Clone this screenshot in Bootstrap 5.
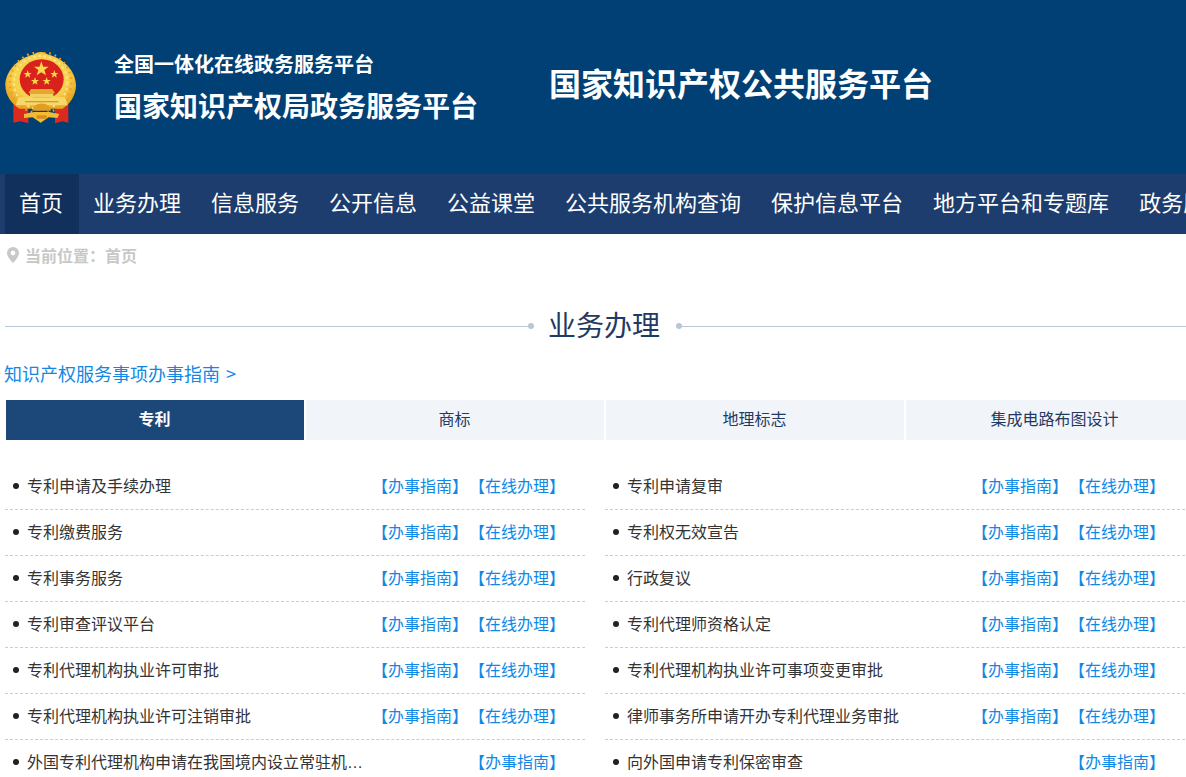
<!DOCTYPE html>
<html lang="zh">
<head>
<meta charset="utf-8">
<title>国家知识产权局政务服务平台</title>
<link href="https://cdn.jsdelivr.net/npm/bootstrap@5.3.0/dist/css/bootstrap.min.css" rel="stylesheet">
<style>
html,body{overflow:hidden;height:777px;background:#fff}
body{font-family:"Microsoft YaHei","Noto Sans CJK SC","Liberation Sans",sans-serif;color:#333;width:1186px}
.site-top{height:174px;background:#004074;color:#fff}
.site-inner{width:1200px;margin-left:5px}
.top-row{height:174px}
.emblem{width:72px;height:74px;flex:none;margin-right:37px;margin-top:3px}
.top-small{font-size:20px;font-weight:700;line-height:30px}
.top-big{font-size:28px;font-weight:700;line-height:42px;margin-top:5px}
.top-name{font-size:32px;font-weight:700;margin-left:71px;line-height:42px;padding-bottom:10px}
.site-nav{height:60px;background:#1c3d6e}
.nav-item-x{display:block;flex:none;padding:0 16px 6px 14px;font-size:22px;line-height:54px;color:#fff;text-decoration:none;white-space:nowrap}
.nav-item-x.on{background:#12305c}
.crumb{font-size:16px;font-weight:700;color:#c8c8c8;height:42px;line-height:38px}
.crumb svg{margin:0 6px 0 2px}
.title-row{height:56px;margin-top:22px;width:1200px}
.title-row .ln{flex:1;height:1px;background:#b9c6d8}
.title-row .dot{width:6px;height:6px;border-radius:50%;background:#b9c6d8;flex:none}
.title-txt{font-size:28px;color:#1f3a63;padding:0 16px 4px 14px;line-height:52px}
.guide{font-size:18px;color:#1088e4;text-decoration:none;display:block;line-height:24px;margin:7px 0 0 -1px;word-spacing:2px}
.tabs-x{margin-top:15px;height:40px}
.tab-x{width:300px;flex:none;height:40px;line-height:36px;padding-right:1px;font-size:16px;text-align:center;color:#1f3a63;background:#f1f4f9;border-left:1px solid #fff;border-right:1px solid #fff}
.tab-x.on{background:#1c4879;color:#fff;font-weight:700}
.lists{margin-top:24px;gap:20px}
.col-x{width:580px;flex:none;list-style:none;margin:0;padding:0}
.li-x{height:46px;border-bottom:1px dashed #ccc;font-size:16px;line-height:43px;padding-bottom:2px}
.li-x .bul{width:6px;height:6px;border-radius:50%;background:#222;flex:none;margin:0 8px}
.li-x .nm{flex:0 1 352px;min-width:0;margin-top:2px;white-space:nowrap;overflow:hidden;text-overflow:ellipsis;color:#333;font-family:"Liberation Sans","Noto Sans CJK SC",sans-serif}
.ops{flex:none;margin-left:auto;margin-right:20px;gap:1px}
.ops a{color:#1088e4;text-decoration:none;width:96px;text-align:center;white-space:nowrap;display:block}
</style>
</head>
<body>
<header class="site-top">
<div class="site-inner top-row d-flex align-items-center">
<svg class="emblem" viewBox="15 36 216 222" aria-hidden="true">
<defs>
<radialGradient id="gld" cx="50%" cy="45%" r="55%"><stop offset="0.7" stop-color="#f7d24f"/><stop offset="1" stop-color="#e9a825"/></radialGradient>
</defs>
<path d="M40 188 L85 205 L85 250 L62 244 L40 248Z" fill="#dd2a20"/>
<path d="M205 188 L165 205 L165 250 L188 244 L205 248Z" fill="#dd2a20"/>
<path d="M122 36c10 0 18 6 24 8 46 12 82 50 82 92 0 32-20 58-40 70H58C36 192 16 168 16 136c0-42 36-80 82-92 6-2 14-8 24-8Z" fill="url(#gld)"/>
<circle cx="122" cy="128" r="92" fill="none" stroke="#f09e1e" stroke-width="7" stroke-dasharray="5 12"/>
<circle cx="122" cy="128" r="80" fill="none" stroke="#fbe58a" stroke-width="6" stroke-dasharray="7 9"/>
<ellipse cx="125" cy="118" rx="66" ry="60" fill="#d9221b"/>
<polygon points="124,64 129.600,80 146,80 133,90 138,106 124,96.500 110,106 115,90 102,80 118.400,80" fill="#f9d84a"/>
<polygon points="83,90 86,99 95,99 88,104.500 90.500,113 83,108 75.500,113 78,104.500 71,99 80,99" fill="#f9d84a"/>
<polygon points="163,90 166,99 175,99 168,104.500 170.500,113 163,108 155.500,113 158,104.500 151,99 160,99" fill="#f9d84a"/>
<polygon points="105,111 108,120 117,120 110,125.500 112.500,134 105,129 97.500,134 100,125.500 93,120 102,120" fill="#f9d84a"/>
<polygon points="140,111 143,120 152,120 145,125.500 147.500,134 140,129 132.500,134 135,125.500 128,120 137,120" fill="#f9d84a"/>
<path d="M85 160l8-13h64l8 13Z" fill="#e5a82c"/>
<path d="M90 172v-12h70v12Z" fill="#f4cf63"/>
<path d="M55 172h140l8 24H47Z" fill="#f7d767"/>
<path d="M75 184h100v3H75Z" fill="#c88a1c"/>
<path d="M97 212a26 20 0 0 1 56 0Z" fill="#e29e20"/>
<path d="M72 222l30-6h46l30 6-6 12-26-2-24 16-24-16-26 2Z" fill="#f2bb33"/>
<path d="M110 226h30v10h-30Z" fill="#d88e1a"/>
</svg>
<div>
<div class="top-small">全国一体化在线政务服务平台</div>
<div class="top-big">国家知识产权局政务服务平台</div>
</div>
<div class="top-name">国家知识产权公共服务平台</div>
</div>
</header>
<nav class="site-nav">
<div class="site-inner d-flex">
<a class="nav-item-x on" href="#">首页</a>
<a class="nav-item-x" href="#">业务办理</a>
<a class="nav-item-x" href="#">信息服务</a>
<a class="nav-item-x" href="#">公开信息</a>
<a class="nav-item-x" href="#">公益课堂</a>
<a class="nav-item-x" href="#">公共服务机构查询</a>
<a class="nav-item-x" href="#">保护信息平台</a>
<a class="nav-item-x" href="#">地方平台和专题库</a>
<a class="nav-item-x" href="#">政务服务</a>
</div>
</nav>
<main class="site-inner">
<div class="crumb d-flex align-items-center">
<svg width="12" height="16" viewBox="0 0 12 16" aria-hidden="true"><path fill="#c8c8c8" fill-rule="evenodd" d="M6 0a6 6 0 0 1 6 6c0 3.6-4 7.800-6 10C4 13.800 0 9.600 0 6a6 6 0 0 1 6-6Zm0 3.600a2.400 2.400 0 1 0 0 4.800 2.400 2.400 0 0 0 0-4.800Z"/></svg>
<span>当前位置：首页</span>
</div>
<div class="title-row d-flex align-items-center">
<span class="ln"></span><span class="dot"></span>
<span class="title-txt">业务办理</span>
<span class="dot"></span><span class="ln"></span>
</div>
<a class="guide" href="#">知识产权服务事项办事指南 &gt;</a>
<div class="tabs-x d-flex">
<div class="tab-x on">专利</div>
<div class="tab-x">商标</div>
<div class="tab-x">地理标志</div>
<div class="tab-x">集成电路布图设计</div>
</div>
<div class="lists d-flex">
<ul class="col-x">
<li class="li-x d-flex align-items-center"><span class="bul"></span><span class="nm">专利申请及手续办理</span><span class="ops d-flex"><a href="#">【办事指南】</a><a href="#">【在线办理】</a></span></li>
<li class="li-x d-flex align-items-center"><span class="bul"></span><span class="nm">专利缴费服务</span><span class="ops d-flex"><a href="#">【办事指南】</a><a href="#">【在线办理】</a></span></li>
<li class="li-x d-flex align-items-center"><span class="bul"></span><span class="nm">专利事务服务</span><span class="ops d-flex"><a href="#">【办事指南】</a><a href="#">【在线办理】</a></span></li>
<li class="li-x d-flex align-items-center"><span class="bul"></span><span class="nm">专利审查评议平台</span><span class="ops d-flex"><a href="#">【办事指南】</a><a href="#">【在线办理】</a></span></li>
<li class="li-x d-flex align-items-center"><span class="bul"></span><span class="nm">专利代理机构执业许可审批</span><span class="ops d-flex"><a href="#">【办事指南】</a><a href="#">【在线办理】</a></span></li>
<li class="li-x d-flex align-items-center"><span class="bul"></span><span class="nm">专利代理机构执业许可注销审批</span><span class="ops d-flex"><a href="#">【办事指南】</a><a href="#">【在线办理】</a></span></li>
<li class="li-x d-flex align-items-center"><span class="bul"></span><span class="nm">外国专利代理机构申请在我国境内设立常驻机构审批</span><span class="ops d-flex"><a href="#">【办事指南】</a></span></li>
</ul>
<ul class="col-x">
<li class="li-x d-flex align-items-center"><span class="bul"></span><span class="nm">专利申请复审</span><span class="ops d-flex"><a href="#">【办事指南】</a><a href="#">【在线办理】</a></span></li>
<li class="li-x d-flex align-items-center"><span class="bul"></span><span class="nm">专利权无效宣告</span><span class="ops d-flex"><a href="#">【办事指南】</a><a href="#">【在线办理】</a></span></li>
<li class="li-x d-flex align-items-center"><span class="bul"></span><span class="nm">行政复议</span><span class="ops d-flex"><a href="#">【办事指南】</a><a href="#">【在线办理】</a></span></li>
<li class="li-x d-flex align-items-center"><span class="bul"></span><span class="nm">专利代理师资格认定</span><span class="ops d-flex"><a href="#">【办事指南】</a><a href="#">【在线办理】</a></span></li>
<li class="li-x d-flex align-items-center"><span class="bul"></span><span class="nm">专利代理机构执业许可事项变更审批</span><span class="ops d-flex"><a href="#">【办事指南】</a><a href="#">【在线办理】</a></span></li>
<li class="li-x d-flex align-items-center"><span class="bul"></span><span class="nm">律师事务所申请开办专利代理业务审批</span><span class="ops d-flex"><a href="#">【办事指南】</a><a href="#">【在线办理】</a></span></li>
<li class="li-x d-flex align-items-center"><span class="bul"></span><span class="nm">向外国申请专利保密审查</span><span class="ops d-flex"><a href="#">【办事指南】</a></span></li>
</ul>
</div>
</main>
</body>
</html>
